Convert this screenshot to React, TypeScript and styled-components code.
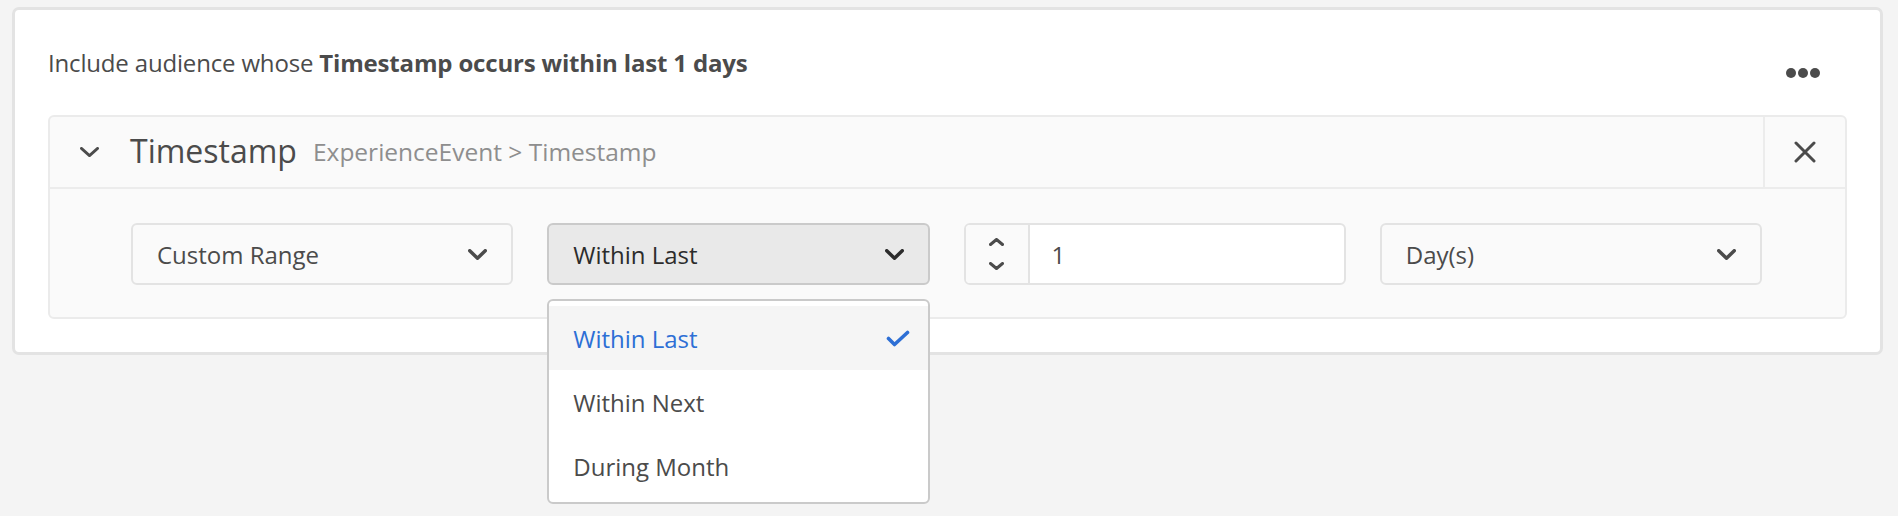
import React from "react";
import styled, { createGlobalStyle } from "styled-components";

const GlobalStyle = createGlobalStyle`
  html, body { margin: 0; padding: 0; background: #f4f4f4; }
  body { font-family: "Open Sans", "Noto Sans", sans-serif; color: #4b4b4b; }
  * { box-sizing: border-box; }
`;

const Page = styled.div`
  min-height: 516px;
  padding: 7px 15px 0 12px;
`;

const Card = styled.section`
  background: #ffffff;
  border: 3px solid #e3e3e3;
  border-radius: 7px;
  padding: 0 33px 33px;
`;

const TitleRow = styled.div`
  height: 105px;
  display: flex;
  align-items: center;
  justify-content: space-between;
`;

const Headline = styled.h2`
  margin: 0;
  font-size: 24px;
  font-weight: 400;
  line-height: 32px;
  letter-spacing: -0.17px;
  color: #4b4b4b;
  b { font-weight: 700; }
`;

const MoreButton = styled.button`
  border: 0;
  background: transparent;
  padding: 0;
  margin: 20px 27px 0 0;
  display: flex;
  gap: 2px;
  cursor: pointer;
`;

const Dot = styled.span`
  width: 10px;
  height: 10px;
  border-radius: 50%;
  background: #4b4b4b;
`;

const Panel = styled.div`
  background: #fafafa;
  border: 2px solid #ebebeb;
  border-radius: 6px;
`;

const PanelHeader = styled.div`
  height: 72px;
  display: flex;
  align-items: stretch;
  border-bottom: 2px solid #ececec;
`;

const HeaderMain = styled.div`
  flex: 1;
  display: flex;
  align-items: center;
  padding-left: 30px;
`;

const Collapse = styled.button`
  border: 0;
  background: transparent;
  padding: 0;
  width: 19px;
  height: 10px;
  display: flex;
  margin-right: 31px;
  cursor: pointer;
`;

const FieldName = styled.span`
  font-size: 32px;
  line-height: 40px;
  color: #4b4b4b;
  margin-right: 16px;
  margin-top: -2px;
`;

const FieldPath = styled.span`
  font-size: 24.5px;
  line-height: 32px;
  color: #8e8e8e;
`;

const CloseCell = styled.button`
  width: 82px;
  border: 0;
  border-left: 2px solid #ececec;
  background: transparent;
  display: flex;
  align-items: center;
  justify-content: center;
  padding: 0;
  cursor: pointer;
`;

const PanelBody = styled.div`
  display: grid;
  grid-template-columns: repeat(4, 1fr);
  column-gap: 34px;
  padding: 34px 83px 32px 81px;
`;

const SelectWrap = styled.div`
  position: relative;
`;

const SelectBox = styled.div<{ $open?: boolean }>`
  height: 62px;
  display: flex;
  align-items: center;
  justify-content: space-between;
  padding: 0 24px;
  border: 2px solid ${(p) => (p.$open ? "#cacaca" : "#e3e3e3")};
  background: ${(p) => (p.$open ? "#e9e9e9" : "#fafafa")};
  border-radius: 6px;
  font-size: 24px;
  color: ${(p) => (p.$open ? "#2c2c2c" : "#4b4b4b")};
`;

const Menu = styled.ul`
  position: absolute;
  top: calc(100% + 14px);
  left: 0;
  right: 0;
  margin: 0;
  padding: 5px 0 4px;
  list-style: none;
  background: #ffffff;
  border: 2px solid #cacaca;
  border-radius: 6px;
  z-index: 5;
`;

const MenuItem = styled.li<{ $selected?: boolean }>`
  height: 64px;
  display: flex;
  align-items: center;
  justify-content: space-between;
  padding: 0 18px 0 24px;
  font-size: 24px;
  background: ${(p) => (p.$selected ? "#f5f5f5" : "transparent")};
  color: ${(p) => (p.$selected ? "#2d6fd5" : "#4b4b4b")};
`;

const NumberField = styled.div`
  height: 62px;
  display: flex;
  border: 2px solid #e3e3e3;
  border-radius: 6px;
  overflow: hidden;
  background: #ffffff;
`;

const Stepper = styled.div`
  width: 64px;
  background: #fafafa;
  border-right: 2px solid #e3e3e3;
  display: flex;
  flex-direction: column;
  align-items: center;
  justify-content: center;
  gap: 16px;
`;

const NumberValue = styled.div`
  flex: 1;
  display: flex;
  align-items: center;
  padding-left: 22px;
  font-size: 24px;
  color: #4b4b4b;
`;

const Chevron = ({ w = 19, h = 11, sw = 3.5, up = false, color = "#4b4b4b" }: { w?: number; h?: number; sw?: number; up?: boolean; color?: string }) => (
  <svg width={w} height={h} viewBox={`0 0 ${w} ${h}`} fill="none">
    <path
      d={up ? `M${sw / 2} ${h - sw / 2} L${w / 2} ${sw / 2} L${w - sw / 2} ${h - sw / 2}` : `M${sw / 2} ${sw / 2} L${w / 2} ${h - sw / 2} L${w - sw / 2} ${sw / 2}`}
      stroke={color}
      strokeWidth={sw}
      strokeLinecap="round"
      strokeLinejoin="round"
    />
  </svg>
);

const CloseIcon = () => (
  <svg width="22" height="22" viewBox="0 0 22 22" fill="none">
    <path d="M2 2 L20 20 M20 2 L2 20" stroke="#4b4b4b" strokeWidth="3" strokeLinecap="round" />
  </svg>
);

const CheckIcon = () => (
  <svg width="24" height="17" viewBox="0 0 24 17" fill="none">
    <path d="M2.5 8.5 L8.5 14.5 L21.5 2.5" stroke="#2d6fd5" strokeWidth="3.6" strokeLinecap="round" strokeLinejoin="round" />
  </svg>
);

const options = ["Within Last", "Within Next", "During Month"];

export default function App() {
  return (
    <Page>
      <GlobalStyle />
      <Card>
        <TitleRow>
          <Headline>
            Include audience whose <b>Timestamp occurs within last 1 days</b>
          </Headline>
          <MoreButton aria-label="More">
            <Dot />
            <Dot />
            <Dot />
          </MoreButton>
        </TitleRow>
        <Panel>
          <PanelHeader>
            <HeaderMain>
              <Collapse aria-label="Collapse">
                <Chevron w={19} h={10} sw={2.8} />
              </Collapse>
              <FieldName>Timestamp</FieldName>
              <FieldPath>ExperienceEvent &gt; Timestamp</FieldPath>
            </HeaderMain>
            <CloseCell aria-label="Remove">
              <CloseIcon />
            </CloseCell>
          </PanelHeader>
          <PanelBody>
            <SelectWrap>
              <SelectBox>
                <span>Custom Range</span>
                <Chevron />
              </SelectBox>
            </SelectWrap>
            <SelectWrap>
              <SelectBox $open>
                <span>Within Last</span>
                <Chevron color="#2c2c2c" />
              </SelectBox>
              <Menu>
                {options.map((o, i) => (
                  <MenuItem key={o} $selected={i === 0}>
                    <span>{o}</span>
                    {i === 0 && <CheckIcon />}
                  </MenuItem>
                ))}
              </Menu>
            </SelectWrap>
            <NumberField>
              <Stepper>
                <Chevron w={15} h={8} sw={3} up />
                <Chevron w={15} h={8} sw={3} />
              </Stepper>
              <NumberValue>1</NumberValue>
            </NumberField>
            <SelectWrap>
              <SelectBox>
                <span>Day(s)</span>
                <Chevron />
              </SelectBox>
            </SelectWrap>
          </PanelBody>
        </Panel>
      </Card>
    </Page>
  );
}
